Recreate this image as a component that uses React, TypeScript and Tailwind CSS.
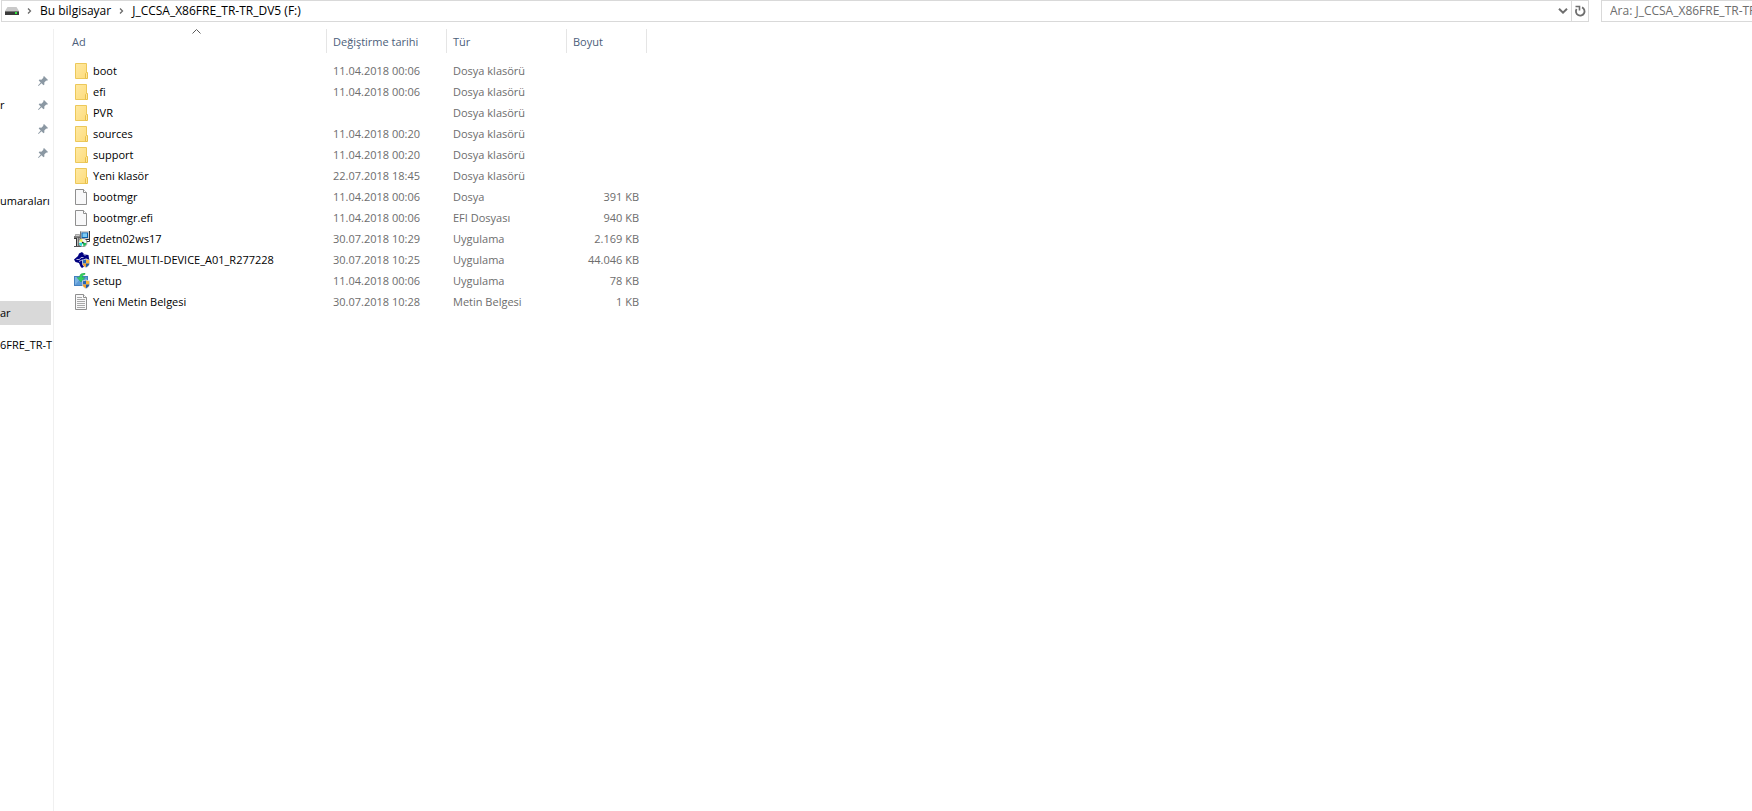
import React from 'react';

type IconKind = 'folder' | 'file' | 'installer' | 'intel' | 'setup' | 'text';

interface Entry {
  name: string;
  date: string;
  type: string;
  size: string;
  icon: IconKind;
}

const entries: Entry[] = [
  { name: 'boot', date: '11.04.2018 00:06', type: 'Dosya klasörü', size: '', icon: 'folder' },
  { name: 'efi', date: '11.04.2018 00:06', type: 'Dosya klasörü', size: '', icon: 'folder' },
  { name: 'PVR', date: '', type: 'Dosya klasörü', size: '', icon: 'folder' },
  { name: 'sources', date: '11.04.2018 00:20', type: 'Dosya klasörü', size: '', icon: 'folder' },
  { name: 'support', date: '11.04.2018 00:20', type: 'Dosya klasörü', size: '', icon: 'folder' },
  { name: 'Yeni klasör', date: '22.07.2018 18:45', type: 'Dosya klasörü', size: '', icon: 'folder' },
  { name: 'bootmgr', date: '11.04.2018 00:06', type: 'Dosya', size: '391 KB', icon: 'file' },
  { name: 'bootmgr.efi', date: '11.04.2018 00:06', type: 'EFI Dosyası', size: '940 KB', icon: 'file' },
  { name: 'gdetn02ws17', date: '30.07.2018 10:29', type: 'Uygulama', size: '2.169 KB', icon: 'installer' },
  { name: 'INTEL_MULTI-DEVICE_A01_R277228', date: '30.07.2018 10:25', type: 'Uygulama', size: '44.046 KB', icon: 'intel' },
  { name: 'setup', date: '11.04.2018 00:06', type: 'Uygulama', size: '78 KB', icon: 'setup' },
  { name: 'Yeni Metin Belgesi', date: '30.07.2018 10:28', type: 'Metin Belgesi', size: '1 KB', icon: 'text' },
];

const pinned = ['', 'r', '', ''];

function Shield() {
  return (
    <g>
      <path d="M8 7.500C9.500 7.500 11 7 12 6.500c1 .5 2.500 1 4 1v3.500c0 2.500-2 4-4 5-2-1-4-2.500-4-5z" fill="#d5dbe0" />
      <path d="M8.800 8.200c1.200 0 2.200-.3 3.200-.8v4H8.800z" fill="#2b66b4" />
      <path d="M12 7.400c1 .5 2 .8 3.200.8v3.200H12z" fill="#f8b437" />
      <path d="M8.800 11.400H12v3.800c-1.800-.9-3.200-2-3.200-3.800z" fill="#f3a02b" />
      <path d="M12 11.400h3.200c0 1.800-1.400 2.900-3.200 3.800z" fill="#24599f" />
    </g>
  );
}

function EntryIcon({ kind }: { kind: IconKind }) {
  return (
    <svg viewBox="0 0 16 16" className="w-4 h-4 shrink-0" aria-hidden="true">
      {kind === 'folder' && (
        <g>
          <defs>
            <linearGradient id="folder" x1="0" y1="0" x2="1" y2="1">
              <stop offset="0" stopColor="#ffe9a2" />
              <stop offset="1" stopColor="#fddc7c" />
            </linearGradient>
          </defs>
          <path d="M1.500.5h11v15h-11z" fill="url(#folder)" stroke="#ecc85a" />
          <path d="M11.500 15.500v-5l1-1h1v6z" fill="#ffe698" stroke="#e8c04b" />
        </g>
      )}
      {(kind === 'file' || kind === 'text') && (
        <g>
          <path d="M1.500.5h8l3 3v12h-11z" fill="#f8f8f9" stroke="#8f8f8f" />
          <path d="M9.500.5v3h3" fill="#fff" stroke="#8f8f8f" />
          {kind === 'text' && (
            <path d="M3 3.500h5M3 5.500h8M3 7.500h8M3 9.500h8M3 11.500h8M3 13.500h8" stroke="#a8a8a8" />
          )}
        </g>
      )}
      {kind === 'installer' && (
        <g>
          <path d="M0 5h6v2H0z" fill="#777" />
          <path d="M1.500 3.500h4v2h-4z" fill="#d0d0d0" stroke="#777" strokeWidth=".6" />
          <path d="M2 7h3v8H2z" fill="#b5b5b5" />
          <path d="M2.500 7v8M5 6.500V15M0 7.500h2" fill="none" stroke="#222" strokeWidth=".9" />
          <path d="M0 15.500h7" stroke="#555" />
          <path d="M6 0h9v9H6z" fill="#cfcfcf" />
          <path d="M6.500.5v8" stroke="#777" />
          <path d="M7.500 1.500H14v5.500H7.500z" fill="#0d62ae" />
          <path d="M8.500 2.300H13v3.700H8.500z" fill="#7dcbf5" />
          <path d="M15.500 0v10.500H12.500M7 8.500h8" fill="none" stroke="#333" />
          <circle cx="8.800" cy="11.600" r="4.100" fill="#f6f6f6" stroke="#555" strokeWidth=".6" />
          <path d="M8.800 11.600 5.200 10A4 4 0 0 1 8 7.700z" fill="#f7ef4a" />
          <path d="M8.800 11.600l3.700.6a4 4 0 0 1-3 3.200z" fill="#18bd52" />
          <path d="M8.800 11.600 4.900 12a4 4 0 0 0 2.600 3.300z" fill="#2adbd6" />
          <circle cx="8.800" cy="11.600" r=".9" fill="#222" />
        </g>
      )}
      {kind === 'intel' && (
        <g>
          <path d="M0 7.500 4 4 5 1.500 8 0l2.500 2.500 4 .5.500 3.500L16 9l-5 5-3 2-1.500-1.500L5 11 1.500 10z" fill="#000080" />
          <path d="M2.500 7.500h3L7 5.500h2.500M5 9.500l3-1.500" fill="none" stroke="#c4c4e6" strokeWidth=".9" />
          <path d="M9.500 2l2 2" fill="none" stroke="#d9d9ee" strokeWidth=".7" />
          <Shield />
        </g>
      )}
      {kind === 'setup' && (
        <g>
          <path d="M0 3h14v10H0z" fill="#4580bd" />
          <path d="M1 4h12v8H1z" fill="#5d9ad6" />
          <path d="M1 12 8 4H1z" fill="#7cb3e4" />
          <path d="M11 0C7.500-.2 5.500 1.500 5.500 4.500H3L7 9l4-4.500H8.300c0-1.800.7-2.700 2.700-3z" fill="#35cf5f" stroke="#1d9b45" strokeWidth=".4" />
          <Shield />
        </g>
      )}
    </svg>
  );
}

function DriveIcon() {
  return (
    <svg viewBox="0 0 14 8" className="w-[14px] h-2" aria-hidden="true">
      <path d="M2.500 0h9L14 4H0z" fill="#c9c9c9" />
      <path d="M0 4h14v4H0z" fill="#3b3b3b" />
      <path d="M0 4.500h14" stroke="#777" />
      <path d="M10 5h2v2h-2z" fill="#2ee83c" />
    </svg>
  );
}

function Crumb() {
  return (
    <svg viewBox="0 0 5 6" className="w-[5px] h-[6px]" aria-hidden="true">
      <path d="M1 .5 3.500 3 1 5.500" fill="none" stroke="#6a6a6a" strokeWidth="1.300" />
    </svg>
  );
}

function Pin() {
  return (
    <svg viewBox="0 0 10 10" className="w-[10px] h-[10px] ml-auto mr-[5px]" aria-hidden="true">
      <path d="M6 0l4 4-1 .8-.8-.2-1.900 2 .1 1.900-.9.800-2-2L.6 10 0 9.400l2.700-2.900-2-2 .8-.9 1.900.1 2-1.900L5.200 1z" fill="#8b98a3" />
    </svg>
  );
}

function AddressBar() {
  return (
    <header className="flex h-[22px] pl-px text-xs">
      <div className="flex flex-1 items-center border border-[#d9d9d9] pl-[3px]">
        <DriveIcon />
        <nav aria-label="Adres" className="flex flex-1 items-center pl-2">
          <Crumb />
          <button type="button" className="px-2 leading-5">Bu bilgisayar</button>
          <Crumb />
          <button type="button" className="px-2 leading-5">J_CCSA_X86FRE_TR-TR_DV5 (F:)</button>
        </nav>
        <button type="button" aria-label="Önceki konumlar" className="flex w-4 h-5 items-center justify-center">
          <svg viewBox="0 0 10 6" className="w-[10px] h-[6px]">
            <path d="M1 .8 5 4.600 9 .8" fill="none" stroke="#6e6e6e" strokeWidth="2" />
          </svg>
        </button>
        <button type="button" aria-label="Yenile" className="flex w-[17px] h-5 items-center justify-center border-l border-[#d9d9d9]">
          <svg viewBox="0 0 12 12" className="w-3 h-3">
            <path d="M8 2.400A4.300 4.300 0 1 1 2.600 4" fill="none" stroke="#6e6e6e" strokeWidth="1.800" />
            <path d="M1.500 1.500H5.500V5.500" fill="none" stroke="#6e6e6e" strokeWidth="1.600" />
          </svg>
        </button>
      </div>
      <input
        type="text"
        aria-label="Ara"
        placeholder="Ara: J_CCSA_X86FRE_TR-TR_DV5 (F:)"
        className="ml-3 w-[151px] border border-r-0 border-[#d9d9d9] pl-2 outline-none placeholder:text-[#6d6d6d]"
      />
    </header>
  );
}

function Sidebar() {
  return (
    <nav aria-label="Gezinti" className="w-[54px] shrink-0 border-r border-[#f0f0f0] pt-10">
      <ul>
        {pinned.map((label, i) => (
          <li key={i} className="flex h-6 items-center">
            {label}
            <Pin />
          </li>
        ))}
      </ul>
      <a href="#ekran" className="mt-6 flex h-6 items-center">umaraları</a>
      <a href="#bilgisayar" className="mt-[88px] mr-[2px] flex h-6 items-center bg-[#d9d9d9]">ar</a>
      <a href="#surucu" className="mt-2 flex h-6 items-center whitespace-nowrap">6FRE_TR-T</a>
    </nav>
  );
}

function FileTable() {
  return (
    <table className="w-[593px] table-fixed border-collapse text-left">
      <colgroup>
        <col className="w-[273px]" />
        <col className="w-[120px]" />
        <col className="w-[120px]" />
        <col className="w-20" />
      </colgroup>
      <thead className="text-[#4c607a]">
        <tr>
          <th className="relative p-0 pb-[7px] font-normal">
            <div className="flex h-6 items-center border-r border-[#e5e5e5] pl-[18px] pt-px">Ad</div>
            <svg viewBox="0 0 9 5" className="absolute left-1/2 top-0 ml-px w-[9px] h-[5px]" aria-hidden="true">
              <path d="M.5 4.500l4-4 4 4" fill="none" stroke="#5a5a5a" />
            </svg>
          </th>
          {['Değiştirme tarihi', 'Tür', 'Boyut'].map((label) => (
            <th key={label} className="p-0 pb-[7px] font-normal">
              <div className="flex h-6 items-center border-r border-[#e5e5e5] pl-[6px] pt-px">{label}</div>
            </th>
          ))}
        </tr>
      </thead>
      <tbody className="text-[#6d6d6d]">
        {entries.map((entry) => (
          <tr key={entry.name} className="h-[21px]">
            <td className="p-0 pl-5 text-black">
              <div className="flex items-center gap-[3px] whitespace-nowrap">
                <EntryIcon kind={entry.icon} />
                {entry.name}
              </div>
            </td>
            <td className="p-0 pl-[6px]">{entry.date}</td>
            <td className="p-0 pl-[6px]">{entry.type}</td>
            <td className="p-0 pr-2 text-right">{entry.size}</td>
          </tr>
        ))}
      </tbody>
    </table>
  );
}

export default function App() {
  return (
    <div className="flex min-h-screen flex-col overflow-hidden bg-white font-['Open_Sans','Noto_Sans',sans-serif] text-[11px] leading-4 text-black">
      <AddressBar />
      <div className="mt-[7px] flex flex-1">
        <Sidebar />
        <main className="flex-1">
          <FileTable />
        </main>
      </div>
    </div>
  );
}
